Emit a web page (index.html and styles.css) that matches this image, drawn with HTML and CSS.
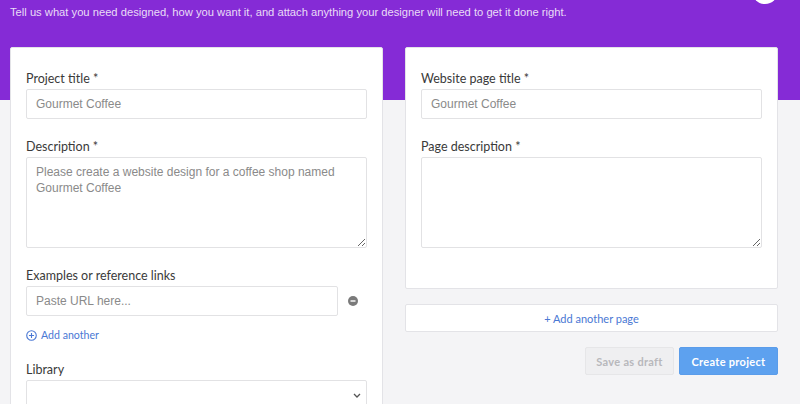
FILE: index.html
```html
<!DOCTYPE html>
<html lang="en">
<head>
<meta charset="utf-8">
<title>New project</title>
<link rel="stylesheet" href="styles.css">
</head>
<body>
<div class="page">
  <p class="intro">Tell us what you need designed, how you want it, and attach anything your designer will need to get it done right.</p>
  <span class="avatar"></span>
  <div class="columns">
    <section class="card card-left">
      <div class="field">
        <label class="label">Project title *</label>
        <div class="input"><span class="ph">Gourmet Coffee</span></div>
      </div>
      <div class="field">
        <label class="label">Description *</label>
        <textarea class="textarea" placeholder="Please create a website design for a coffee shop named Gourmet Coffee"></textarea>
      </div>
      <div class="field field-links">
        <label class="label">Examples or reference links</label>
        <div class="url-row">
          <div class="input url"><span class="ph">Paste URL here...</span></div>
          <span class="remove"><svg width="10" height="10" viewBox="0 0 10 10"><circle cx="5" cy="5" r="5" fill="#7a7a7a"/><rect x="2.5" y="4.3" width="5" height="1.4" fill="#fff"/></svg></span>
        </div>
        <a class="add-link"><svg width="11" height="11" viewBox="0 0 12 12"><circle cx="6" cy="6" r="5.2" fill="none" stroke="#4a78d4" stroke-width="1.2"/><path d="M6 3.2v5.6M3.2 6h5.6" stroke="#4a78d4" stroke-width="1.2"/></svg>Add another</a>
      </div>
      <div class="field">
        <label class="label">Library</label>
        <div class="select"><svg width="8" height="5" viewBox="0 0 8 5"><path d="M1 1l3 3 3-3" fill="none" stroke="#555" stroke-width="1.3"/></svg></div>
      </div>
    </section>
    <div class="right-col">
      <section class="card card-right">
        <div class="field">
          <label class="label">Website page title *</label>
          <div class="input"><span class="ph">Gourmet Coffee</span></div>
        </div>
        <div class="field">
          <label class="label">Page description *</label>
          <textarea class="textarea"></textarea>
        </div>
      </section>
      <button class="add-page">+ Add another page</button>
      <div class="actions">
        <button class="btn btn-draft">Save as draft</button>
        <button class="btn btn-create">Create project</button>
      </div>
    </div>
  </div>
</div>
</body>
</html>
```
FILE: styles.css
```css
* { box-sizing: border-box; }
html, body { margin: 0; padding: 0; }
body {
  width: 800px;
  height: 404px;
  overflow: hidden;
  font-family: "Liberation Sans", Arial, sans-serif;
}
.page {
  position: relative;
  min-height: 404px;
  background: linear-gradient(to bottom, #852bd6 0, #852bd6 100px, #f4f4f6 100px);
}
.intro {
  margin: 0;
  padding: 5px 10px 0;
  height: 47px;
  font-size: 11.2px;
  line-height: 15px;
  color: #e9dcf7;
}
.avatar {
  position: absolute;
  top: -22px;
  left: 752px;
  width: 26px;
  height: 26px;
  border-radius: 50%;
  background: #fff;
}
.columns {
  display: grid;
  grid-template-columns: 373px 373px;
  column-gap: 22px;
  padding-left: 10px;
  align-items: start;
}
.card {
  background: #fff;
  border: 1px solid #e3e3e7;
  border-radius: 2px;
  padding: 18px 15px 0 15px;
}
.card-left { min-height: 380px; }
.card-right { height: 242px; padding-right: 15px; }
.field { margin-bottom: 15px; }
.field-links { margin-bottom: 13px; }
.label {
  display: block;
  font-family: Lato, "Liberation Sans", sans-serif;
  font-size: 12.5px;
  line-height: 18px;
  padding-top: 4px;
  color: #3a3a3a;
  margin-bottom: 1px;
}
.input {
  height: 30px;
  border: 1px solid #e2e2e4;
  border-radius: 2px;
  padding: 0 9px;
  display: flex;
  align-items: center;
  background: #fff;
}
.ph {
  font-size: 12px;
  color: #8a8a8a;
}
.textarea {
  display: block;
  width: 100%;
  height: 91px;
  border: 1px solid #e2e2e4;
  border-radius: 2px;
  padding: 6px 9px;
  font-family: "Liberation Sans", Arial, sans-serif;
  font-size: 12px;
  line-height: 16px;
  color: #555;
  resize: vertical;
  outline: none;
}
.textarea::placeholder { color: #8a8a8a; }
.url-row {
  display: flex;
  align-items: center;
}
.url { width: 312px; }
.remove {
  display: flex;
  margin-left: 10px;
}
.add-link {
  display: flex;
  align-items: center;
  gap: 4px;
  margin-top: 10px;
  font-family: Lato, "Liberation Sans", sans-serif;
  font-size: 10.6px;
  line-height: 18px;
  color: #4a78d4;
}
.select {
  height: 30px;
  border: 1px solid #e2e2e4;
  border-radius: 2px;
  display: flex;
  align-items: center;
  justify-content: flex-end;
  padding-right: 5px;
}
.right-col {
  display: flex;
  flex-direction: column;
}
.add-page {
  margin-top: 15px;
  height: 28px;
  background: #fff;
  border: 1px solid #e3e3e7;
  border-radius: 2px;
  font-family: Lato, "Liberation Sans", sans-serif;
  font-size: 11px;
  color: #4a78d4;
  padding: 0;
}
.actions {
  display: flex;
  justify-content: flex-end;
  gap: 5px;
  margin-top: 15px;
}
.btn {
  height: 28px;
  border-radius: 2px;
  font-family: Lato, "Liberation Sans", sans-serif;
  font-size: 11px;
  font-weight: 700;
  letter-spacing: 0.3px;
  padding: 0;
}
.btn-draft {
  width: 89px;
  background: #efeff1;
  border: 1px solid #e6e6e8;
  color: #b8b8bc;
}
.btn-create {
  width: 99px;
  background: #5da1ef;
  border: 1px solid #5a9cea;
  color: #fff;
}
```
